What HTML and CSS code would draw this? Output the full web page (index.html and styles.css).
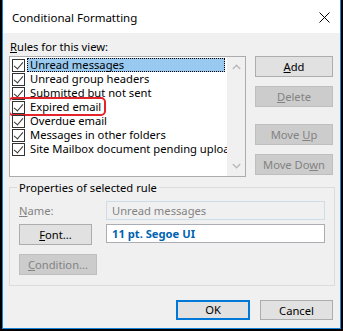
FILE: index.html
```html
<!DOCTYPE html>
<html lang="en">
<head>
    <meta charset="UTF-8">
    <title>Conditional Formatting</title>
    <link rel="stylesheet" href="styles.css">
</head>
<body>
    <div class="window">
        <div class="titlebar">
            <span class="title">Conditional Formatting</span>
            <svg class="close" width="11" height="11" viewBox="0 0 11 11">
                <path d="M0.5 0.5 L10.5 10.5 M10.5 0.5 L0.5 10.5" stroke="#000" stroke-width="1" fill="none"/>
            </svg>
        </div>

        <div class="content">
            <div class="caption"><u>R</u>ules for this view:</div>

            <div class="rules">
                <div class="listbox">
                    <ul class="items">
                        <li class="item selected"><span class="check"></span><span class="text">Unread messages</span></li>
                        <li class="item"><span class="check"></span><span class="text">Unread group headers</span></li>
                        <li class="item"><span class="check"></span><span class="text">Submitted but not sent</span></li>
                        <li class="item marked"><span class="check"></span><span class="text">Expired email</span><span class="ring"></span></li>
                        <li class="item"><span class="check"></span><span class="text">Overdue email</span></li>
                        <li class="item"><span class="check"></span><span class="text">Messages in other folders</span></li>
                        <li class="item"><span class="check"></span><span class="text">Site Mailbox document pending upload</span></li>
                    </ul>
                    <div class="vscroll">
                        <svg width="9" height="6" viewBox="0 0 9 6"><path d="M0.8 5 L4.5 1.3 L8.2 5" stroke="#b9b9b9" stroke-width="1.4" fill="none"/></svg>
                        <svg width="9" height="6" viewBox="0 0 9 6"><path d="M0.8 1 L4.5 4.7 L8.2 1" stroke="#b9b9b9" stroke-width="1.4" fill="none"/></svg>
                    </div>
                </div>

                <div class="side">
                    <button class="btn"><u>A</u>dd</button>
                    <button class="btn" disabled><u>D</u>elete</button>
                    <button class="btn gap" disabled>Move <u>U</u>p</button>
                    <button class="btn" disabled>Move Do<u>w</u>n</button>
                </div>
            </div>

            <fieldset class="group">
                <legend>Properties of selected rule</legend>
                <div class="props">
                    <span class="label"><u>N</u>ame:</span>
                    <div class="field disabled">Unread messages</div>
                    <button class="btn font"><u>F</u>ont...</button>
                    <div class="field sample">11 pt. Segoe UI</div>
                    <button class="btn cond" disabled><u>C</u>ondition...</button>
                </div>
            </fieldset>

            <div class="footer">
                <button class="btn ok">OK</button>
                <button class="btn cancel">Cancel</button>
            </div>
        </div>
    </div>
</body>
</html>
```

FILE: styles.css
```css
* {
    box-sizing: border-box;
}

body {
    margin: 0;
    padding: 0 2px 2px 2px;
    background-color: #000;
    font-family: "Segoe UI", "Noto Sans", sans-serif;
    font-size: 11.2px;
    color: #000;
}

.window {
    width: 339px;
    height: 329px;
    background-color: #f0f0f0;
    border: 1px solid #1883d7;
    border-top: none;
}

.titlebar {
    height: 33px;
    background-color: #fff;
    display: flex;
    align-items: center;
    justify-content: space-between;
    padding: 0 10px 0 9px;
}

.title {
    font-size: 11.5px;
    line-height: 15px;
    padding-top: 1px;
}

.close {
    margin-top: 1px;
}

.content {
    padding: 6px 6px 0 6px;
}

.caption {
    line-height: 15px;
    padding-left: 1px;
    margin-bottom: 2px;
}

u {
    text-decoration: underline;
    text-underline-offset: 1px;
}

.rules {
    display: flex;
    gap: 9px;
}

.listbox {
    flex: none;
    width: 237px;
    height: 121px;
    background-color: #fff;
    border: 1px solid #acacac;
    display: flex;
}

.items {
    list-style: none;
    margin: 0;
    padding: 1px 0 0 2px;
    flex: 1 1 auto;
    width: 0;
    overflow: hidden;
}

.item {
    position: relative;
    height: 14px;
    display: flex;
    align-items: center;
    white-space: nowrap;
}

.check {
    flex: none;
    width: 13px;
    height: 13px;
    border: 1px solid #333;
    background: #fff;
    position: relative;
}

.check::after {
    content: "";
    position: absolute;
    left: 3px;
    top: 0px;
    width: 4px;
    height: 8px;
    border: solid #333;
    border-width: 0 1px 1px 0;
    transform: rotate(40deg);
}

.text {
    margin-left: 2px;
    padding: 0 2px;
    line-height: 12px;
    height: 14px;
    border: 1px solid transparent;
}

.selected .text {
    flex: 1;
    margin-right: 2px;
    background-color: #99c9ef;
    border: 1px dotted #000;
}

.ring {
    position: absolute;
    left: -4px;
    top: -3px;
    width: 98px;
    height: 19px;
    border: 2px solid #e3242b;
    border-radius: 5px;
}

.vscroll {
    flex: 0 0 18px;
    width: 18px;
    background-color: #f0f0f0;
    display: flex;
    flex-direction: column;
    justify-content: space-between;
    align-items: center;
    padding: 7px 0 7px 0;
}

.side {
    width: 78px;
    display: flex;
    flex-direction: column;
    gap: 9px;
}

.btn {
    font-family: inherit;
    font-size: 11.2px;
    color: #000;
    background-color: #e1e1e1;
    border: 1px solid #adadad;
    height: 21px;
    padding: 0;
    line-height: 17px;
    text-align: center;
}

.btn:disabled {
    background-color: #cccccc;
    border-color: #bfbfbf;
    color: #838383;
}

.side .gap {
    margin-top: 8px;
}

.group {
    margin: 3px 0 0 0;
    padding: 6px 9px 6px 9px;
    border: 1px solid #dcdcdc;
    height: 106px;
}

.group legend {
    padding: 0 2px;
    margin-left: -2px;
    line-height: 15px;
}

.props {
    display: grid;
    grid-template-columns: 87px 219px;
    grid-template-rows: 19px 21px 21px;
    row-gap: 4px;
    align-items: center;
}

.label {
    color: #838383;
}

.field {
    height: 19px;
    border: 1px solid #abadb3;
    padding: 0 5px;
    line-height: 17px;
    background-color: #fff;
}

.field.disabled {
    background-color: #f0f0f0;
    border-color: #ccdce9;
    color: #838383;
}

.field.sample {
    color: #0063b1;
    font-weight: bold;
    align-self: start;
}

.font {
    width: 73px;
}

.cond {
    width: 78px;
    margin-top: 9px;
}

.footer {
    display: flex;
    justify-content: flex-end;
    gap: 10px;
    margin-top: 14px;
    padding-right: 1px;
}

.ok {
    width: 74px;
    height: 20px;
    border: 2px solid #0078d7;
    line-height: 16px;
}

.cancel {
    width: 73px;
    height: 20px;
}
```
